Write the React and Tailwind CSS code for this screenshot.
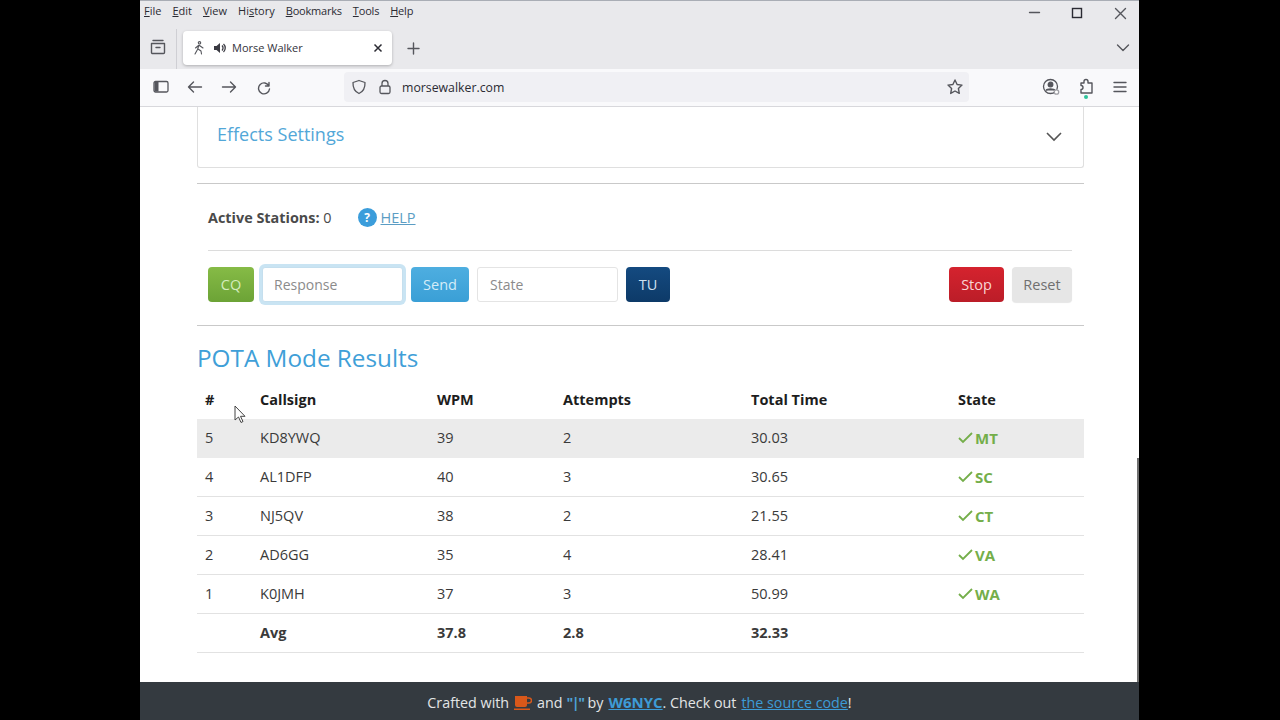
import React from "react";

const font = { fontFamily: '"Open Sans", "Noto Sans", sans-serif' };

const rows = [
  ["5", "KD8YWQ", "39", "2", "30.03", "MT"],
  ["4", "AL1DFP", "40", "3", "30.65", "SC"],
  ["3", "NJ5QV", "38", "2", "21.55", "CT"],
  ["2", "AD6GG", "35", "4", "28.41", "VA"],
  ["1", "K0JMH", "37", "3", "50.99", "WA"],
];

const gridCols = "grid grid-cols-[63px_177px_126px_188px_207px_126px]";

function Stroke({ w = 20, h = 20, vb = "0 0 20 20", children, className = "" }) {
  return (
    <svg width={w} height={h} viewBox={vb} fill="none" stroke="#55565c" strokeWidth="1.4" strokeLinecap="round" strokeLinejoin="round" className={className}>
      {children}
    </svg>
  );
}

function Menu() {
  return (
    <div className="flex items-center h-[20px] pl-[4px] gap-[11px] text-[11px] text-[#2b2b33]">
      <span><u>F</u>ile</span>
      <span><u>E</u>dit</span>
      <span><u>V</u>iew</span>
      <span>Hi<u>s</u>tory</span>
      <span className="tracking-[-0.200px]"><u>B</u>ookmarks</span>
      <span className="tracking-[-0.200px]"><u>T</u>ools</span>
      <span className="tracking-[-0.200px]"><u>H</u>elp</span>
    </div>
  );
}

function Chrome() {
  return (
    <div className="bg-[#e9e9ec] border-t border-t-[#a9adb5] shrink-0">
      <div className="flex justify-between h-[26px]">
        <Menu />
        <div className="flex items-center gap-[26px] pr-[10px] h-[24px]">
          <Stroke w={16} h={16} vb="0 0 16 16"><path d="M2.500 7.500h10" /></Stroke>
          <svg width="17" height="17" viewBox="0 0 17 17" fill="none" stroke="#2b2b33" strokeWidth="1.4"><rect x="3.5" y="3.5" width="9" height="9" /></svg>
          <Stroke w={17} h={17} vb="0 0 17 17"><path d="M3.5 3.5l10 10M13.5 3.5l-10 10" /></Stroke>
        </div>
      </div>
      <div className="flex items-start h-[42px]">
        <div className="w-[36px] pl-[9px] pt-[11px]">
          <Stroke w={18} h={18} vb="0 0 18 18">
            <path d="M4 2.500h10M2.500 5.500h13v9a1 1 0 0 1-1 1h-11a1 1 0 0 1-1-1zM7 9.500h4" />
          </Stroke>
        </div>
        <div className="w-px h-[40px] bg-[#cfcfd4] mt-[2px] mr-[6px]"></div>
        <div className="w-[209px] h-[34px] mt-[4px] bg-white rounded-[4px] shadow-[0_1px_3px_rgba(0,0,0,0.25)] flex items-center pl-[10px] pr-[9px]">
          <svg width="12" height="14" viewBox="0 0 12 14" fill="none" stroke="#55565c" strokeWidth="1.1" strokeLinecap="round" strokeLinejoin="round">
            <circle cx="6.500" cy="1.800" r="1.200" />
            <path d="M6 4L4.500 8.500 2 13M5 8l3 2 .5 3M5.500 4.500L2.500 7M6.500 4.500l3.500 2.500" />
          </svg>
          <svg width="14" height="14" viewBox="0 0 14 14" className="ml-[8px]">
            <path d="M1 5h2.500L7 2v10L3.500 9H1z" fill="#3a3a42" />
            <path d="M9 4.500a3.500 3.500 0 0 1 0 5M10.500 3a5.500 5.500 0 0 1 0 8" fill="none" stroke="#3a3a42" strokeWidth="1.3" />
          </svg>
          <span className="ml-[5px] text-[11px] text-[#33333b] flex-1">Morse Walker</span>
          <svg width="10" height="10" viewBox="0 0 10 10" stroke="#2b2b33" strokeWidth="1.5"><path d="M1.500 1.500l7 7M8.500 1.500l-7 7" /></svg>
        </div>
        <div className="ml-[15px] mt-[15px]">
          <Stroke w={13} h={13} vb="0 0 13 13"><path d="M6.500 1v11M1 6.500h11" /></Stroke>
        </div>
        <div className="ml-auto mr-[9px] mt-[15px]">
          <Stroke w={14} h={12} vb="0 0 14 12"><path d="M1.500 3l5.500 5.500L12.500 3" /></Stroke>
        </div>
      </div>
      <div className="flex items-center h-[38px] pb-px bg-[#f9f9fb] border-b border-b-[#d8d8dc]">
        <div className="w-[204px] flex items-center pl-[13px]">
          <svg width="16" height="14" viewBox="0 0 16 14" fill="none" stroke="#55565c" strokeWidth="1.3">
            <rect x="1" y="1.500" width="14" height="10.500" rx="1.500" />
            <rect x="1.500" y="2" width="4" height="9.500" fill="#55565c" stroke="none" />
          </svg>
          <Stroke w={16} h={16} vb="0 0 16 16" className="ml-[18px]"><path d="M14.500 8h-13M6.500 3l-5 5 5 5" /></Stroke>
          <Stroke w={16} h={16} vb="0 0 16 16" className="ml-[18px]"><path d="M1.500 8h13M9.500 3l5 5-5 5" /></Stroke>
          <Stroke w={16} h={16} vb="0 0 16 16" className="ml-[19px]"><path d="M13 3.500v3.500h-3.500M13 7a5.500 5.500 0 1 0 .5 3" /></Stroke>
        </div>
        <div className="w-[625px] h-[30px] bg-[#f0f0f4] rounded-[4px] flex items-center pl-[7px] pr-[5px]">
          <svg width="16" height="16" viewBox="0 0 16 16" fill="none" stroke="#55565c" strokeWidth="1.300" strokeLinejoin="round"><path d="M8 1.500l6 2c.2 5-1.500 9-6 11-4.500-2-6.200-6-6-11z" /></svg>
          <svg width="14" height="16" viewBox="0 0 14 16" fill="none" stroke="#55565c" strokeWidth="1.300" className="ml-[11px]"><rect x="2" y="7" width="10" height="7.500" rx="1.500" /><path d="M4 7V4.500a3 3 0 0 1 6 0V7" /></svg>
          <span className="ml-[10px] pt-[3px] text-[12.300px] text-[#2b2b33] flex-1">morsewalker.com</span>
          <Stroke w={18} h={18} vb="0 0 18 18"><path d="M9 2l2.100 4.500 4.900.6-3.600 3.400.9 4.900L9 13l-4.300 2.400.9-4.900L2 7.100l4.900-.6z" /></Stroke>
        </div>
        <div className="flex items-center ml-[72px] gap-[16px] relative">
          <svg width="20" height="20" viewBox="0 0 20 20" fill="none" stroke="#55565c" strokeWidth="1.300">
            <circle cx="9.500" cy="9.500" r="7" />
            <circle cx="9.500" cy="7.500" r="2.300" fill="#55565c" />
            <path d="M5 13.500c1-2 8-2 9 0" fill="#55565c" />
            <circle cx="15.500" cy="15" r="2.200" fill="#fff" stroke="#a0a0a6" />
          </svg>
          <div className="relative">
            <Stroke w={18} h={20} vb="0 0 18 20"><path d="M7 4.500a2 2 0 0 1 4 0V6h4v10H4v-3.500a2 2 0 0 0 0-4V6h3z" /></Stroke>
            <span className="absolute left-[7px] top-[18px] w-[4px] h-[4px] rounded-full bg-[#2ec39a]"></span>
          </div>
          <Stroke w={16} h={14} vb="0 0 16 14" className="ml-[1px]"><path d="M2 2.500h12M2 7h12M2 11.500h12" /></Stroke>
        </div>
      </div>
    </div>
  );
}

function Page() {
  return (
    <div className="flex-1 min-h-0 bg-white overflow-hidden pl-[57px] pr-[55px] relative">
      <div className="h-[61px] border border-t-0 border-[#dfdfdf] rounded-b-[3px] flex items-start justify-between pl-[19px] pr-[20px] pt-[13px]">
        <span className="text-[18px] leading-[28px] text-[#52a7d8]">Effects Settings</span>
        <svg width="18" height="12" viewBox="0 0 18 12" fill="none" stroke="#555" strokeWidth="1.600" className="mt-[11px]"><path d="M2 2l7 7 7-7" /></svg>
      </div>
      <div className="h-px bg-[#c9c9c9] mt-[15px]"></div>
      <div className="ml-[11px] mr-[12px]">
        <div className="h-[67px] pt-px flex items-center border-b border-[#dcdcdc]">
          <span className="text-[14.400px] text-[#4a4a4a]"><b className="font-bold">Active Stations:</b> 0</span>
          <span className="ml-[26px] w-[19px] h-[19px] rounded-full bg-[#3b9ddb] text-white text-[12px] font-bold flex items-center justify-center">?</span>
          <a className="ml-[4px] text-[14.500px] text-[#5b9dc4] underline">HELP</a>
        </div>
        <div className="flex items-center mt-[16px] h-[35px]">
          <button className="w-[46px] h-[35px] rounded-[4px] bg-[linear-gradient(#86bb46,#6ca336)] text-[#d5ecbd] text-[14.500px]">CQ</button>
          <div className="ml-[8px] w-[141px] h-[35px] rounded-[3px] border border-[#c5dfee] bg-white shadow-[0_0_0_3px_#c9e4f3] flex items-center pl-[11px] text-[14px] text-[#8b8b8b]">Response</div>
          <button className="ml-[8px] w-[58px] h-[35px] rounded-[4px] bg-[linear-gradient(#4eaee0,#3a9fd6)] text-[#d4ecf8] text-[14.500px]">Send</button>
          <div className="ml-[8px] w-[141px] h-[35px] rounded-[3px] border border-[#e4e4e4] bg-white flex items-center pl-[12px] text-[14px] text-[#8b8b8b]">State</div>
          <button className="ml-[8px] w-[44px] h-[35px] rounded-[4px] bg-[linear-gradient(#144a80,#0d3a68)] text-[#cfe0ef] text-[14.500px]">TU</button>
          <button className="ml-auto w-[55px] h-[35px] rounded-[4px] bg-[linear-gradient(#d5232e,#bb1d28)] text-[#f8d5d5] text-[14.500px]">Stop</button>
          <button className="ml-[8px] w-[60px] h-[35px] rounded-[4px] bg-[#e6e6e6] text-[#707070] text-[14.500px] shadow-[0_1px_1px_rgba(0,0,0,0.1)]">Reset</button>
        </div>
      </div>
      <div className="h-px bg-[#c9c9c9] mt-[23px]"></div>
      <h2 className="mt-[14px] text-[24.300px] leading-[36px] text-[#3f9fd8] font-normal">POTA Mode Results</h2>
      <div className={`${gridCols} h-[43px] pt-[5px] items-center text-[14.500px] font-bold text-[#1d1d1d]`}>
        <span className="pl-[8px]">#</span>
        <span>Callsign</span>
        <span>WPM</span>
        <span>Attempts</span>
        <span>Total Time</span>
        <span>State</span>
      </div>
      {rows.map((r, i) => (
        <div key={r[0]} className={`${gridCols} h-[39px] items-center text-[14.500px] text-[#3a3a3a] border-b ${i === 0 ? "bg-[#ebebeb] border-[#ebebeb]" : "border-[#e2e2e2]"}`}>
          <span className="pl-[8px]">{r[0]}</span>
          <span>{r[1]}</span>
          <span>{r[2]}</span>
          <span>{r[3]}</span>
          <span>{r[4]}</span>
          <span className="flex items-center font-bold text-[15px] text-[#74ae4a]">
            <svg width="15" height="12" viewBox="0 0 15 12" fill="none" stroke="#74ae4a" strokeWidth="1.800" className="mr-[2px]"><path d="M1 6l4 4 9-9" /></svg>
            {r[5]}
          </span>
        </div>
      ))}
      <div className={`${gridCols} h-[39px] items-center text-[14.500px] font-bold text-[#3a3a3a] border-b border-[#e2e2e2]`}>
        <span></span>
        <span>Avg</span>
        <span>37.8</span>
        <span>2.8</span>
        <span>32.33</span>
        <span></span>
      </div>
      <div className="absolute right-0 bottom-0 top-[351px] w-[2px] bg-[#6f6f6f]"></div>
      <svg width="14" height="20" viewBox="0 0 14 20" className="absolute left-[93px] top-[298px]">
        <path d="M2 1v14l3.500-3 2.500 5.500 2-1-2.500-5.200H12z" fill="#fff" stroke="#444" strokeWidth="1" strokeLinejoin="round" />
      </svg>
    </div>
  );
}

function Footer() {
  return (
    <div className="h-[38px] pt-[3px] bg-[#343a40] shrink-0 flex items-center justify-center text-[14.300px] text-[#e3e5e6]">
      <span>Crafted with</span>
      <svg width="18" height="16" viewBox="0 0 18 16" className="mx-[5px]">
        <path d="M1 1h12v9a2 2 0 0 1-2 2H3a2 2 0 0 1-2-2z" fill="#d9581a" />
        <path d="M13 3h2a2 2 0 0 1 0 5h-2" fill="none" stroke="#d9581a" strokeWidth="1.500" />
        <rect x="0" y="13.500" width="16" height="1.500" fill="#d9581a" />
      </svg>
      <span>and</span>
      <span className="ml-[4px] mr-[4px] font-bold text-[#4ea3d6] tracking-[-1.500px]">"|"</span>
      <span>by</span>
      <a className="ml-[5px] text-[15px] font-bold text-[#3d9bd6] underline">W6NYC</a>
      <span>. Check out</span>
      <a className="ml-[5px] text-[#3d9bd6] underline">the source code</a>
      <span>!</span>
    </div>
  );
}

export default function App() {
  return (
    <div className="w-[1280px] h-[720px] bg-black overflow-hidden flex" style={font}>
      <div className="w-[999px] ml-[140px] h-full flex flex-col">
        <Chrome />
        <Page />
        <Footer />
      </div>
    </div>
  );
}
